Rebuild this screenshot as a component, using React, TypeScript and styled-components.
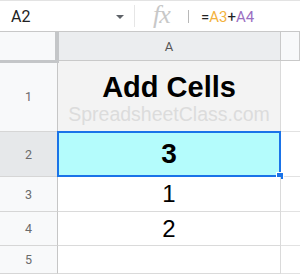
import React from 'react';
import styled, { createGlobalStyle } from 'styled-components';

const GlobalStyle = createGlobalStyle`
  html, body {
    margin: 0;
    padding: 0;
    background: #fff;
  }
  body {
    font-family: Arial, "Liberation Sans", sans-serif;
  }
`;

const Sheet = styled.div`
  width: 300px;
  height: 274px;
  overflow: hidden;
  background: #fff;
  border-top: 1px solid #e3e3e3;
  box-sizing: border-box;
`;

const FormulaBar = styled.div`
  display: flex;
  align-items: center;
  height: 30px;
  border-bottom: 1px solid #c8c8c8;
`;

const NameBox = styled.div`
  width: 134px;
  box-sizing: border-box;
  display: flex;
  align-items: center;
  justify-content: space-between;
  padding: 0 10px 0 11px;
  font-family: Roboto, Arial, sans-serif;
  font-size: 16px;
  color: #222;
`;

const Arrow = styled.span`
  width: 0;
  height: 0;
  border-left: 4px solid transparent;
  border-right: 4px solid transparent;
  border-top: 4px solid #5f6368;
  margin-top: 2px;
`;

const Divider = styled.div<{ $h: number; $c: string }>`
  width: 1px;
  height: ${p => p.$h}px;
  background: ${p => p.$c};
`;

const Fx = styled.div`
  width: 53px;
  text-align: center;
  font-family: "Liberation Serif", "Times New Roman", serif;
  font-style: italic;
  font-size: 26px;
  color: #c8c8c8;
  letter-spacing: -1px;
  margin-top: -3px;
`;

const Formula = styled.div`
  padding-left: 12px;
  font-family: Roboto, Arial, sans-serif;
  font-size: 15px;
  color: #222;
  margin-top: 1px;
`;

const Ref = styled.span<{ $c: string }>`
  color: ${p => p.$c};
`;

const Grid = styled.div`
  display: grid;
  grid-template-columns: 58px 223px 1fr;
  grid-template-rows: 29px 71px 45px 35px 34px 28px 1fr;
`;

const Corner = styled.div`
  background: #f8f9fa;
  border-right: 4px solid #c4c6c8;
  border-bottom: 3px solid #c4c6c8;
  margin-right: -1px;
  margin-bottom: -2px;
  z-index: 1;
`;

const ColHead = styled.div<{ $active?: boolean }>`
  background: ${p => (p.$active ? '#ebedef' : '#f8f9fa')};
  border-right: 1px solid #c9c9c9;
  border-bottom: 1px solid #c9c9c9;
  display: flex;
  align-items: center;
  justify-content: center;
  font-family: Roboto, Arial, sans-serif;
  font-size: 13px;
  color: #555;
  padding-top: 1px;
`;

const RowHead = styled.div<{ $active?: boolean }>`
  background: ${p => (p.$active ? '#e6e8ea' : '#f8f9fa')};
  border-right: 1px solid #c6c6c6;
  border-bottom: 1px solid #d6d6d6;
  display: flex;
  align-items: center;
  justify-content: center;
  font-family: Roboto, Arial, sans-serif;
  font-size: 12.5px;
  color: #6b6b6b;
`;

const Cell = styled.div<{ $bg?: string }>`
  position: relative;
  background: ${p => p.$bg || '#fff'};
  border-right: 1px solid #dadada;
  border-bottom: 1px solid #dadada;
  display: flex;
  flex-direction: column;
  align-items: center;
  justify-content: center;
  color: #000;
`;

const Blank = styled.div`
  border-bottom: 1px solid #e2e2e2;
`;

const Title = styled.div`
  font-weight: bold;
  font-size: 29px;
  line-height: 32px;
  margin-top: 3px;
`;

const Watermark = styled.div`
  font-size: 19.5px;
  line-height: 22px;
  color: #dcdcdc;
`;

const Value = styled.div<{ $bold?: boolean }>`
  font-size: ${p => (p.$bold ? 28 : 24)}px;
  font-weight: ${p => (p.$bold ? 'bold' : 'normal')};
`;

const Selected = styled.div`
  position: absolute;
  inset: -1px -1px -1px -1px;
  border: 2px solid #1a73e8;
  pointer-events: none;
`;

const Handle = styled.div`
  position: absolute;
  right: -5px;
  bottom: -5px;
  width: 6px;
  height: 6px;
  background: #1a73e8;
  border: 1px solid #fff;
`;

export default function App() {
  return (
    <>
      <GlobalStyle />
      <Sheet>
        <FormulaBar>
          <NameBox>
            A2
            <Arrow />
          </NameBox>
          <Divider $h={22} $c="#e6e6e6" />
          <Fx>fx</Fx>
          <Divider $h={13} $c="#b8b8b8" />
          <Formula>
            =<Ref $c="#f3b23c">A3</Ref>+<Ref $c="#9b6fc2">A4</Ref>
          </Formula>
        </FormulaBar>
        <Grid>
          <Corner />
          <ColHead $active>A</ColHead>
          <ColHead />

          <RowHead>1</RowHead>
          <Cell $bg="#f3f3f3">
            <Title>Add Cells</Title>
            <Watermark>SpreadsheetClass.com</Watermark>
          </Cell>
          <Blank />

          <RowHead $active>2</RowHead>
          <Cell $bg="#b4fcfc">
            <Value $bold>3</Value>
            <Selected>
              <Handle />
            </Selected>
          </Cell>
          <Blank />

          <RowHead>3</RowHead>
          <Cell>
            <Value>1</Value>
          </Cell>
          <Blank />

          <RowHead>4</RowHead>
          <Cell>
            <Value>2</Value>
          </Cell>
          <Blank />

          <RowHead>5</RowHead>
          <Cell />
          <Blank />

          <RowHead />
          <Cell />
          <Blank />
        </Grid>
      </Sheet>
    </>
  );
}
